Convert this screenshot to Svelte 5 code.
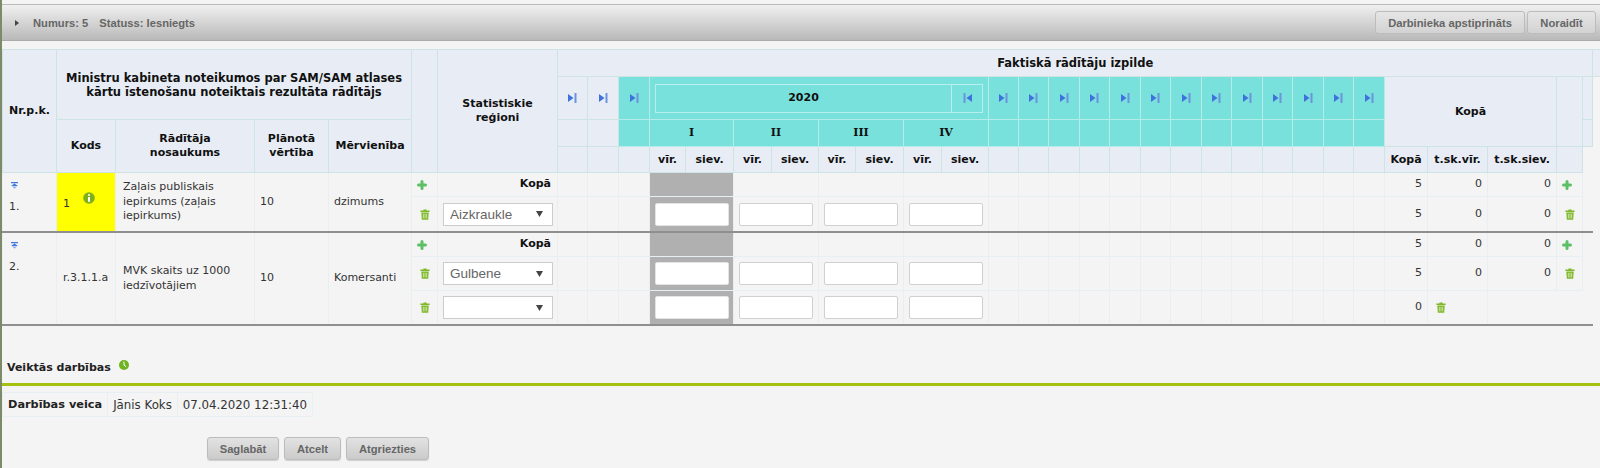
<script>
    const edges = [2, 56, 115, 254, 328, 411, 437, 557, 587, 618, 649, 685, 733, 771, 818, 855, 903, 941, 988, 1018, 1048, 1079, 1109, 1140, 1170, 1201, 1231, 1262, 1292, 1323, 1353, 1384, 1427, 1487, 1556, 1582, 1592, 1600];
    const widths = edges.slice(1).map((e, i) => e - edges[i]);
    const months = Array(13).fill(0);
    const quarters = ['I', 'II', 'III', 'IV'];

    const groups = [
        {
            nr: '1.', code: '1', info: true, plan: '10', unit: 'dzimums',
            name: 'Zaļais publiskais iepirkums (zaļais iepirkums)',
            rows: [
                { total: true, sums: ['5', '0', '0'] },
                { region: 'Aizkraukle', sums: ['5', '0', '0'], tall: true, roomy: true }
            ]
        },
        {
            nr: '2.', code: 'r.3.1.1.a', plan: '10', unit: 'Komersanti',
            name: 'MVK skaits uz 1000 iedzīvotājiem',
            rows: [
                { total: true, sums: ['5', '0', '0'] },
                { region: 'Gulbene', sums: ['5', '0', '0'], tall: true },
                { region: '', sums: ['0'], tall: true, open: true }
            ]
        }
    ];
</script>

{#snippet stepNext()}
    <svg class="step" width="9" height="10" viewBox="0 0 9 10"><path d="M0 1l5.5 4L0 9z" fill="#3f72dc" /><rect x="6.5" y="0" width="2" height="10" fill="#6c93dc" /></svg>
{/snippet}

{#snippet stepBack()}
    <svg class="step" width="9" height="10" viewBox="0 0 9 10"><rect x="0.5" y="0" width="2" height="10" fill="#6c93dc" /><path d="M9 1L3.5 5 9 9z" fill="#3f72dc" /></svg>
{/snippet}

{#snippet plus()}
    <svg class="plus" width="10" height="10" viewBox="0 0 10 10"><path d="M5 1.5v7M1.5 5h7" stroke="#5fbf66" stroke-width="3" stroke-linecap="round" /></svg>
{/snippet}

{#snippet trash()}
    <svg class="trash" width="10" height="11" viewBox="0 0 10 11">
        <path d="M3.4 1.6V.5h3.2v1.1H9.6v1.3H.4V1.6z" fill="#7fb82a" />
        <path d="M1.3 3.5h7.4l-.5 7.2H1.8z" fill="#7fb82a" />
        <path d="M3.4 4.8v4.6M5 4.8v4.6M6.6 4.8v4.6" stroke="#e4f0cf" stroke-width=".7" />
    </svg>
{/snippet}

<div class="page">
    <header class="bar">
        <div class="status">
            <span class="caret"></span>
            <span>Numurs: 5</span>
            <span>Statuss: Iesniegts</span>
        </div>
        <div class="bar-actions">
            <button class="btn wide">Darbinieka apstiprināts</button>
            <button class="btn no">Noraidīt</button>
        </div>
    </header>

    <table class="grid">
        <colgroup>
            {#each widths as w}
                <col style="width:{w}px" />
            {/each}
        </colgroup>
        <thead>
            <tr class="h1">
                <th rowspan="4">Nr.p.k.</th>
                <th colspan="4" rowspan="2" class="wider">Ministru kabineta noteikumos par SAM/SAM atlases<br />kārtu īstenošanu noteiktais rezultāta rādītājs</th>
                <th rowspan="4"></th>
                <th rowspan="4">Statistiskie<br />reģioni</th>
                <th colspan="29" class="wider">Faktiskā rādītāju izpilde</th>
                <th></th>
            </tr>
            <tr class="h2">
                <th>{@render stepNext()}</th>
                <th>{@render stepNext()}</th>
                <th class="teal">{@render stepNext()}</th>
                <th colspan="8" class="teal">
                    <div class="year">
                        <span class="year-label">2020</span>
                        <span class="year-back">{@render stepBack()}</span>
                    </div>
                </th>
                {#each months as _}
                    <th class="teal">{@render stepNext()}</th>
                {/each}
                <th colspan="3" rowspan="2">Kopā</th>
                <th rowspan="2"></th>
                <th></th>
                <td class="bare"></td>
            </tr>
            <tr class="h3">
                <th rowspan="2">Kods</th>
                <th rowspan="2">Rādītāja<br />nosaukums</th>
                <th rowspan="2">Plānotā<br />vērtība</th>
                <th rowspan="2">Mērvienība</th>
                <th></th>
                <th></th>
                <th class="teal"></th>
                {#each quarters as q}
                    <th colspan="2" class="teal quarter">{q}</th>
                {/each}
                {#each months as _}
                    <th class="teal"></th>
                {/each}
                <th></th>
                <td class="bare"></td>
            </tr>
            <tr class="h4">
                <th></th>
                <th></th>
                <th></th>
                {#each quarters as _}
                    <th>vīr.</th>
                    <th>siev.</th>
                {/each}
                {#each months as _}
                    <th></th>
                {/each}
                <th>Kopā</th>
                <th>t.sk.vīr.</th>
                <th>t.sk.siev.</th>
                <th></th>
                <td class="bare"></td>
                <td class="bare"></td>
            </tr>
        </thead>
        <tbody>
            {#each groups as g}
                {#each g.rows as row, i}
                    {@const last = i === g.rows.length - 1}
                    <tr class:tall={row.tall} class:roomy={row.roomy} class:last>
                        {#if i === 0}
                            <td rowspan={g.rows.length} class="nr end">
                                <svg class="fold" width="9" height="7" viewBox="0 0 9 7"><path d="M1 0h7v1.2H1zM4.5 1.4L8 4H1z" fill="#4078e0" /><path d="M2 4.4h5L4.5 6.8z" fill="#8fb0ec" /></svg>
                                <div>{g.nr}</div>
                            </td>
                            <td rowspan={g.rows.length} class="code end" class:flag={g.info}>
                                {g.code}
                                {#if g.info}
                                    <svg class="info" width="12" height="12" viewBox="0 0 12 12"><circle cx="6" cy="6" r="5.8" fill="#7fb01a" /><path d="M5 2.2h2v1.6H5zM5 5h2v4.8H5z" fill="#fff" /></svg>
                                {/if}
                            </td>
                            <td rowspan={g.rows.length} class="name end">{g.name}</td>
                            <td rowspan={g.rows.length} class="end">{g.plan}</td>
                            <td rowspan={g.rows.length} class="unit end">{g.unit}</td>
                        {/if}
                        <td class="act">{#if row.total}{@render plus()}{:else}{@render trash()}{/if}</td>
                        {#if row.total}
                            <td class="total">Kopā</td>
                        {:else}
                            <td class="region">
                                <select class="pick"><option>{row.region}</option></select>
                            </td>
                        {/if}
                        <td></td><td></td><td></td>
                        {#each quarters as _, q}
                            <td colspan="2" class="cell" class:shade={q === 0}>
                                {#if !row.total}<input class="field" class:on={q === 0} />{/if}
                            </td>
                        {/each}
                        {#each months as _}
                            <td></td>
                        {/each}
                        <td class="num">{row.sums[0]}</td>
                        {#if row.open}
                            <td class="act">{@render trash()}</td>
                            <td class="bare"></td>
                            <td class="bare"></td>
                        {:else}
                            <td class="num">{row.sums[1]}</td>
                            <td class="num">{row.sums[2]}</td>
                            <td class="act">{#if row.total}{@render plus()}{:else}{@render trash()}{/if}</td>
                        {/if}
                        <td class="bare"></td>
                    </tr>
                {/each}
            {/each}
        </tbody>
    </table>

    <h3 class="log-title">
        Veiktās darbības
        <svg width="10" height="10" viewBox="0 0 10 10"><circle cx="5" cy="5" r="5" fill="#6fb320" /><path d="M5 1.6v3.6l2.2 1.4" stroke="#fff" stroke-width="1" fill="none" /></svg>
    </h3>
    <div class="rule"></div>

    <table class="log">
        <tbody>
            <tr>
                <th>Darbības veica</th>
                <td>Jānis Koks</td>
                <td>07.04.2020 12:31:40</td>
            </tr>
        </tbody>
    </table>

    <div class="actions">
        <button class="btn low save">Saglabāt</button>
        <button class="btn low cancel">Atcelt</button>
        <button class="btn low back">Atgriezties</button>
    </div>
</div>

<style>
    :global(body) {
        margin: 0;
        background: #f4f4f4;
    }

    .page {
        height: 468px;
        box-sizing: border-box;
        padding-top: 4px;
        border-left: 2px solid #7d8a68;
        background: #f4f4f4;
        font-family: "DejaVu Sans", Verdana, sans-serif;
        font-size: 11px;
        color: #333;
        overflow: hidden;
    }

    .bar {
        display: flex;
        justify-content: space-between;
        align-items: center;
        box-sizing: border-box;
        height: 37px;
        padding: 0 4px 0 13px;
        border-top: 1px solid #bbb;
        border-bottom: 1px solid #aaa;
        background: linear-gradient(#f0f0f0, #b9b9b9);
    }

    .status {
        display: flex;
        align-items: center;
        gap: 11px;
        font: bold 11.2px "Liberation Sans", Arial, sans-serif;
        color: #666;
    }

    .caret {
        width: 0;
        height: 0;
        margin-right: 3px;
        border-left: 4px solid #444;
        border-top: 3.5px solid transparent;
        border-bottom: 3.5px solid transparent;
    }

    .bar-actions {
        display: flex;
        gap: 2px;
    }

    .btn {
        height: 23px;
        padding: 0;
        border: 1px solid #bcbcbc;
        border-radius: 3px;
        background: linear-gradient(#e6e6e6, #d2d2d2);
        font: bold 11.2px "Liberation Sans", Arial, sans-serif;
        color: #666;
        white-space: nowrap;
    }

    .wide {
        width: 150px;
    }

    .no {
        width: 69px;
    }

    .grid {
        table-layout: fixed;
        width: 1598px;
        margin-top: 8px;
        border-collapse: collapse;
    }

    .grid th,
    .grid td {
        padding: 0 5px;
        overflow: visible;
        white-space: nowrap;
    }

    .grid th {
        padding: 0;
        border: 1px solid #cde3e4;
        background: #e8edf5;
        font-weight: bold;
        color: #111;
        text-align: center;
        line-height: 14px;
    }

    .grid th.teal {
        border-color: #b4ecea;
        background: #78e1dc;
    }

    .grid td.bare {
        border: none;
        background: none;
    }

    .wider {
        font-size: 11.5px;
    }

    .quarter {
        font-family: "DejaVu Serif", serif;
    }

    .h1 { height: 27px; }
    .h2 { height: 43px; }
    .h3 { height: 27px; }
    .h4 { height: 26px; }

    .step {
        display: block;
        margin: 0 auto;
    }

    .year {
        display: flex;
        height: 27px;
        margin: 0 5px;
        border: 1px solid #b8efec;
        align-items: center;
    }

    .year-label {
        flex: 1;
    }

    .year-back {
        display: flex;
        align-items: center;
        justify-content: center;
        width: 30px;
        height: 100%;
        border-left: 1px solid #b8efec;
    }

    .grid td {
        height: 23px;
        border: 1px solid #e8eff3;
        line-height: 14.5px;
        white-space: normal;
    }

    .grid tr.tall td {
        height: 33px;
    }

    .grid tr.roomy td {
        height: 34px;
    }

    .grid tr.last td,
    .grid td.end {
        border-bottom: 2px solid #8f8f8f;
    }

    .grid td.nr {
        padding: 9px 0 0 6px;
        vertical-align: top;
    }

    .fold {
        display: block;
        margin: 0 0 11px 1px;
    }

    .grid td.code {
        white-space: nowrap;
        padding-left: 6px;
    }

    .grid td.flag {
        background: #ff0;
    }

    .info {
        margin: 0 0 0 9px;
        vertical-align: 3px;
    }

    .grid td.name {
        padding: 0 5px 0 7px;
    }

    .grid td.unit {
        white-space: nowrap;
    }

    .grid td.act {
        padding: 0;
        text-align: left;
    }

    .plus {
        display: block;
        margin-left: 5px;
    }

    .trash {
        display: block;
        margin-left: 8px;
    }

    .grid td.total {
        padding-right: 6px;
        font-weight: bold;
        color: #111;
        text-align: right;
    }

    .grid td.region {
        padding: 0 5px;
    }

    .pick {
        display: block;
        appearance: none;
        box-sizing: border-box;
        width: 110px;
        height: 23px;
        padding: 0 6px;
        border: 1px solid #ccc;
        border-radius: 0;
        background: #fff url("data:image/svg+xml,%3Csvg xmlns='http://www.w3.org/2000/svg' width='7' height='6'%3E%3Cpath d='M0 0h7L3.5 6z' fill='%23444'/%3E%3C/svg%3E") no-repeat right 9px center;
        font: 13.5px "Liberation Sans", Arial, sans-serif;
        color: #666;
    }

    .grid td.cell {
        padding: 0 5px;
    }

    .grid td.shade {
        background: #b0b0b0;
    }

    .field {
        display: block;
        box-sizing: border-box;
        width: 74px;
        height: 23px;
        padding: 0;
        border: 1px solid #d0d0d0;
        border-radius: 2px;
        background: #fff;
    }

    .field.on {
        border-color: #e4e4e4;
    }

    .grid td.num {
        padding-right: 5px;
        text-align: right;
    }

    .log-title {
        display: flex;
        align-items: flex-start;
        gap: 8px;
        margin: 35px 0 8px 5px;
        font-size: 11px;
        line-height: 14px;
        color: #222;
    }

    .log-title svg {
        margin-top: -1px;
    }

    .rule {
        height: 3px;
        background: #a3c20f;
    }

    .log {
        margin-top: 6px;
        border-collapse: collapse;
    }

    .log th,
    .log td {
        height: 23px;
        padding: 0 5px;
        border: 1px solid #e8eff3;
        font-size: 11.8px;
        text-align: left;
        white-space: nowrap;
    }

    .log th {
        font-size: 11.3px;
        color: #222;
    }

    .actions {
        display: flex;
        gap: 5px;
        margin: 20px 0 0 205px;
    }

    .low {
        height: 23px;
        background: linear-gradient(#e2e2e2, #cbcbcb);
        box-shadow: 0 1px 1px rgba(0, 0, 0, .15);
    }

    .save { width: 72px; }
    .cancel { width: 57px; }
    .back { width: 83px; }
</style>
